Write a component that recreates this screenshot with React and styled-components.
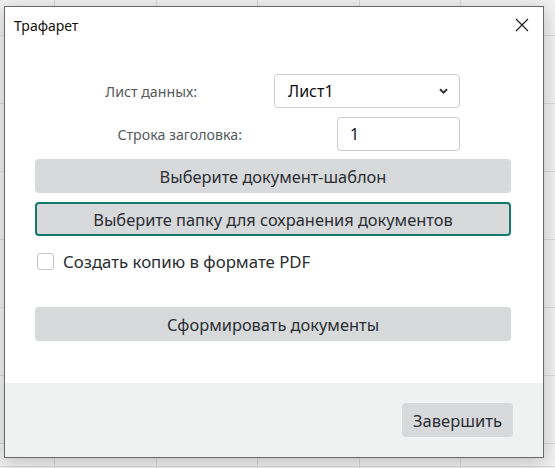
import React from 'react';
import styled, { createGlobalStyle } from 'styled-components';

const GlobalStyle = createGlobalStyle`
  html, body {
    margin: 0;
    padding: 0;
  }
  body {
    font-family: "Noto Sans", "Open Sans", sans-serif;
    color: #1f2326;
  }
`;

const Backdrop = styled.div`
  width: 555px;
  height: 468px;
  box-sizing: border-box;
  padding: 6px 0 0 4px;
  overflow: hidden;
  background-color: #f1f1f1;
  background-image:
    linear-gradient(#d9d9d9, #d9d9d9),
    repeating-linear-gradient(to bottom, transparent 0, transparent 35px, #d9d9d9 35px, #d9d9d9 36px, transparent 36px, transparent 68px),
    repeating-linear-gradient(to right, transparent 0, transparent 54px, #d9d9d9 54px, #d9d9d9 55px, transparent 55px, transparent 101.5px);
  background-size: 100% 1px, 100% 100%, 100% 100%;
  background-position: 0 466px, 0 0, 0 0;
  background-repeat: no-repeat, no-repeat, no-repeat;
`;

const Window = styled.div`
  width: 540px;
  height: 452px;
  box-sizing: border-box;
  border: 1px solid #6a6a6a;
  background: #ffffff;
  display: flex;
  flex-direction: column;
  box-shadow: 0 4px 18px rgba(0, 0, 0, 0.22);
`;

const TitleBar = styled.div`
  height: 40px;
  display: flex;
  align-items: center;
  justify-content: space-between;
  padding: 0 14px 0 9px;
  flex-shrink: 0;
`;

const Title = styled.span`
  font-size: 14px;
  color: #111;
  margin-top: -3px;
`;

const CloseButton = styled.button`
  border: none;
  background: transparent;
  padding: 0;
  width: 14px;
  height: 14px;
  display: flex;
  margin-top: -4px;
  cursor: pointer;
`;

const Body = styled.div`
  flex: 1;
  display: flex;
  flex-direction: column;
  padding: 27px 32px 0 30px;
`;

const FormRow = styled.div`
  display: flex;
  align-items: center;
  justify-content: flex-end;
  gap: ${p => p.$gap}px;
  padding-right: 51px;
  margin-top: ${p => p.$mt || 0}px;
`;

const Label = styled.span`
  font-size: 14.2px;
  color: #555a5e;
`;

const SelectBox = styled.div`
  width: 186px;
  height: 34px;
  box-sizing: border-box;
  border: 1px solid #c9cbce;
  border-radius: 4px;
  display: flex;
  align-items: center;
  justify-content: space-between;
  padding: 0 11px 0 13px;
  font-size: 16px;
  color: #111;
`;

const SpinBox = styled.div`
  width: 123px;
  height: 34px;
  box-sizing: border-box;
  border: 1px solid #c9cbce;
  border-radius: 4px;
  display: flex;
  align-items: center;
  padding: 0 12px;
  font-size: 16px;
  color: #111;
`;

const ActionButton = styled.button`
  height: 34px;
  width: 100%;
  box-sizing: border-box;
  margin-top: ${p => p.$mt || 0}px;
  border: ${p => (p.$focused ? '2px solid #137b6b' : 'none')};
  border-radius: 4px;
  background: #d8d9db;
  font-family: "Noto Sans", "Open Sans", sans-serif;
  font-size: 16.4px;
  color: #2a2e33;
  cursor: pointer;
`;

const CheckRow = styled.label`
  display: flex;
  align-items: center;
  gap: 9px;
  height: 17px;
  margin-top: 17px;
  padding-left: 2px;
  font-size: 16.8px;
  line-height: 17px;
  color: #2a2e33;
`;

const CheckBox = styled.span`
  width: 17px;
  height: 17px;
  box-sizing: border-box;
  border: 1px solid #c5c8cc;
  border-radius: 3px;
  background: #fff;
  flex-shrink: 0;
`;

const Footer = styled.div`
  height: 74px;
  flex-shrink: 0;
  background: #f0f1f1;
  display: flex;
  justify-content: flex-end;
  align-items: flex-start;
  padding: 20px 30px 0 0;
  box-sizing: border-box;
`;

const FooterButton = styled.button`
  width: 111px;
  height: 34px;
  border: none;
  border-radius: 4px;
  background: #d8d9db;
  font-family: "Noto Sans", "Open Sans", sans-serif;
  font-size: 16.5px;
  color: #2a2e33;
  cursor: pointer;
`;

const Chevron = () => (
  <svg width="9" height="6" viewBox="0 0 9 6">
    <path d="M1 1.2 L4.5 4.6 L8 1.2" fill="none" stroke="#333" strokeWidth="2" />
  </svg>
);

const CloseIcon = () => (
  <svg width="14" height="14" viewBox="0 0 14 14">
    <path d="M1 1 L13 13 M13 1 L1 13" stroke="#1a1a1a" strokeWidth="1.1" />
  </svg>
);

const App = () => {
  return (
    <>
      <GlobalStyle />
      <Backdrop>
        <Window>
          <TitleBar>
            <Title>Трафарет</Title>
            <CloseButton><CloseIcon /></CloseButton>
          </TitleBar>
          <Body>
            <FormRow $gap={77}>
              <Label>Лист данных:</Label>
              <SelectBox>
                <span>Лист1</span>
                <Chevron />
              </SelectBox>
            </FormRow>
            <FormRow $gap={95} $mt={9}>
              <Label>Строка заголовка:</Label>
              <SpinBox>1</SpinBox>
            </FormRow>
            <ActionButton $mt={8}>Выберите документ-шаблон</ActionButton>
            <ActionButton $mt={9} $focused>Выберите папку для сохранения документов</ActionButton>
            <CheckRow>
              <CheckBox />
              Создать копию в формате PDF
            </CheckRow>
            <ActionButton $mt={37}>Сформировать документы</ActionButton>
          </Body>
          <Footer>
            <FooterButton>Завершить</FooterButton>
          </Footer>
        </Window>
      </Backdrop>
    </>
  );
};

export default App;
